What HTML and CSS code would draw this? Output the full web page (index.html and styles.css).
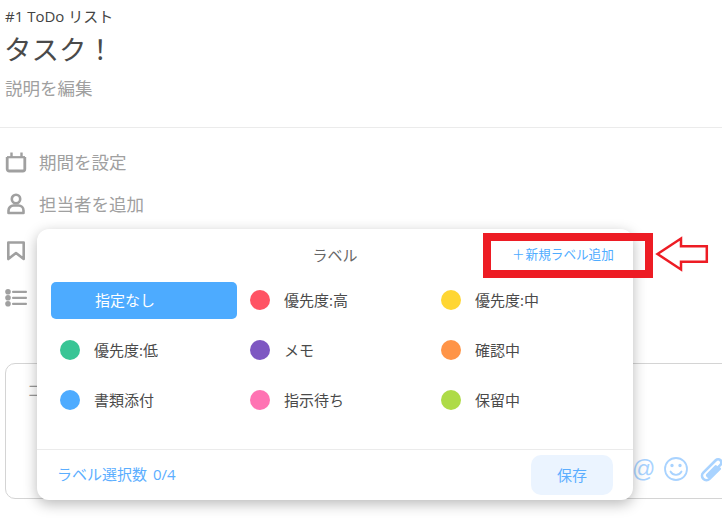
FILE: index.html
```html
<!DOCTYPE html>
<html lang="ja">
<head>
<meta charset="utf-8">
<title>タスク</title>
<link rel="stylesheet" href="styles.css">
</head>
<body>
<div class="page">
  <header class="head">
    <div class="crumb">#1 ToDo リスト</div>
    <h1 class="title">タスク！</h1>
    <div class="desc">説明を編集</div>
  </header>
  <ul class="props">
    <li class="prop">
      <svg class="ico" width="22" height="22" viewBox="0 0 22 22"><path d="M2 6.200h18" fill="none" stroke="#a0a0a0" stroke-width="2.200"/><path d="M2.200 6v12a2 2 0 0 0 2 2h13.600a2 2 0 0 0 2-2V6" fill="none" stroke="#a0a0a0" stroke-width="2.800"/><path d="M6.500 1.500v5M16.500 1.500v5" fill="none" stroke="#a0a0a0" stroke-width="2.400"/></svg>
      <span class="prop-text">期間を設定</span>
    </li>
    <li class="prop">
      <svg class="ico" width="22" height="22" viewBox="0 0 22 22"><circle cx="11" cy="6" r="4.200" fill="none" stroke="#a0a0a0" stroke-width="2.600"/><path d="M3.500 20v-2.500a5 5 0 0 1 5-5h5a5 5 0 0 1 5 5v2.500z" fill="none" stroke="#a0a0a0" stroke-width="2.600" stroke-linejoin="round"/></svg>
      <span class="prop-text">担当者を追加</span>
    </li>
    <li class="prop">
      <svg class="ico" width="22" height="22" viewBox="0 0 22 22"><path d="M3.300 2.500h15.400v16.500l-7.700-6-7.700 6z" fill="none" stroke="#a0a0a0" stroke-width="2.600" stroke-linejoin="round"/></svg>
    </li>
    <li class="prop">
      <svg class="ico" width="22" height="22" viewBox="0 0 22 22"><g fill="#a0a0a0"><circle cx="3" cy="4.800" r="2.800"/><circle cx="3" cy="10.800" r="2.800"/><circle cx="3" cy="16.800" r="2.800"/><rect x="7" y="3.700" width="15" height="2.200" rx="1"/><rect x="7" y="9.700" width="15" height="2.200" rx="1"/><rect x="7" y="15.700" width="15" height="2.200" rx="1"/></g></svg>
    </li>
  </ul>
  <section class="comment">
    <div class="placeholder">コ</div>
    <div class="tools">
      <span class="at">@</span>
      <svg class="smile" width="24" height="26" viewBox="0 0 24 26" fill="none" stroke="#a9d3ff" stroke-width="1.800" stroke-linecap="round"><circle cx="12" cy="13" r="11"/><path d="M6.500 15.500c2.500 4.500 8.500 4.500 11 0"/><circle cx="8" cy="9.500" r=".8"/><circle cx="16" cy="9.500" r=".8"/></svg>
      <svg class="clip" width="24" height="26" viewBox="0 0 24 26" fill="none" stroke="#a9d3ff" stroke-width="2.400" stroke-linecap="round"><g transform="rotate(45 11 13) translate(1 -1) scale(1.100)"><path d="M14.500 7v13a4 4 0 0 1-8 0V4a3 3 0 0 1 6 0v14.500a1 1 0 0 1-2 0V8"/></g></svg>
    </div>
  </section>
</div>

<div class="popup">
  <div class="popup-head">
    <span class="popup-title">ラベル</span>
    <span class="add"><span class="plus">＋</span>新規ラベル追加</span>
  </div>
  <div class="labels">
    <div class="label selected">指定なし</div>
    <div class="label"><i class="dot c-red"></i>優先度:高</div>
    <div class="label"><i class="dot c-yellow"></i>優先度:中</div>
    <div class="label"><i class="dot c-green"></i>優先度:低</div>
    <div class="label"><i class="dot c-purple"></i>メモ</div>
    <div class="label"><i class="dot c-orange"></i>確認中</div>
    <div class="label"><i class="dot c-blue"></i>書類添付</div>
    <div class="label"><i class="dot c-pink"></i>指示待ち</div>
    <div class="label"><i class="dot c-lime"></i>保留中</div>
  </div>
  <div class="popup-foot">
    <span class="count">ラベル選択数 0/4</span>
    <button class="save" type="button">保存</button>
  </div>
</div>

<div class="red-box"></div>
<svg class="red-arrow" width="56" height="38" viewBox="0 0 56 38"><path d="M3.500 19 27 3.500v7.700h25.800v15.600H27v7.700z" fill="#fff" stroke="#ed1c24" stroke-width="2.500"/></svg>
</body>
</html>
```
FILE: styles.css
```css
* { box-sizing: border-box; }
html, body { margin: 0; padding: 0; }
body {
  width: 722px;
  height: 519px;
  overflow: hidden;
  background: #fff;
  position: relative;
  font-family: "Open Sans", "Noto Sans CJK JP", sans-serif;
  color: #4a4a4a;
}
.page { padding-top: 6px; }
.head {
  height: 122px;
  padding-left: 5px;
  border-bottom: 1px solid #ebebeb;
}
.crumb { font-size: 15px; line-height: 20px; color: #444; }
.title { margin: 4px 0 0 -1px; font-size: 27.500px; font-weight: 400; line-height: 40px; color: #4a4a4a; }
.desc { margin-top: 6px; font-size: 17.500px; line-height: 24px; color: #a0a0a0; }
.props { list-style: none; margin: 13px 0 0; padding: 0 0 0 5px; height: 220px; }
.prop {
  display: flex;
  align-items: center;
  gap: 12px;
  height: 42px;
  margin-bottom: 5px;
  font-size: 17.500px;
  color: #a0a0a0;
}
.prop:first-child { margin-bottom: 0; }
.prop-text { padding-bottom: 2px; }
.comment {
  position: absolute;
  left: 5px;
  top: 363px;
  width: 740px;
  height: 136px;
  border: 1px solid #d4d4d4;
  border-radius: 10px;
}
.placeholder { padding: 14px 0 0 21px; font-size: 15px; line-height: 24px; color: #999; }
.tools {
  position: absolute;
  left: 626px;
  top: 92px;
  display: flex;
  align-items: center;
  height: 26px;
}
.at { font-family: "Liberation Sans", sans-serif; font-size: 23px; line-height: 26px; color: #a9d3ff; width: 22px; margin-right: 10px; }
.smile { margin-right: 12px; }
.clip { flex: none; overflow: visible; }
.popup {
  position: absolute;
  left: 37px;
  top: 229px;
  width: 596px;
  height: 271px;
  background: #fff;
  border-radius: 12px;
  box-shadow: 0 4px 14px rgba(0, 0, 0, .28);
  display: flex;
  flex-direction: column;
}
.popup-head { position: relative; height: 53px; padding-bottom: 2px; display: flex; justify-content: center; align-items: center; }
.popup-title { font-size: 15px; color: #666; }
.add { position: absolute; left: 475px; top: 16px; font-size: 12.600px; line-height: 20px; color: #4facff; white-space: nowrap; }
.plus { margin-right: 1px; }
.labels {
  display: grid;
  grid-template-columns: 186px 187px 186px;
  grid-auto-rows: 36px;
  column-gap: 4px;
  row-gap: 14px;
  padding-left: 14px;
  height: 167px;
}
.label { display: flex; align-items: center; gap: 14px; padding-left: 9px; font-size: 15px; line-height: 20px; color: #4a4a4a; }
.selected { height: 37px; padding: 0 0 1px 44px; background: #4dabff; border-radius: 5px; color: #fff; }
.dot { width: 20px; height: 20px; border-radius: 50%; }
.c-red { background: #ff5364; }
.c-yellow { background: #ffd633; }
.c-green { background: #38c595; }
.c-purple { background: #7e57c2; }
.c-orange { background: #ff9447; }
.c-blue { background: #4dabff; }
.c-pink { background: #ff73b3; }
.c-lime { background: #aedb47; }
.popup-foot {
  flex: 1;
  border-top: 1px solid #ebebeb;
  display: flex;
  align-items: center;
  justify-content: space-between;
  padding: 0 20px 0 20px;
}
.count { font-size: 15px; line-height: 20px; padding-bottom: 2px; word-spacing: 2px; color: #5baeff; }
.save {
  width: 82px;
  height: 40px;
  border: 0;
  border-radius: 10px;
  background: #ebf4ff;
  color: #5baeff;
  font: inherit;
  font-size: 15px;
  padding: 0 0 2px;
}
.red-box {
  position: absolute;
  left: 483px;
  top: 233px;
  width: 170px;
  height: 45px;
  border: 8px solid #ed1c24;
}
.red-arrow { position: absolute; left: 654px; top: 235px; }
```
